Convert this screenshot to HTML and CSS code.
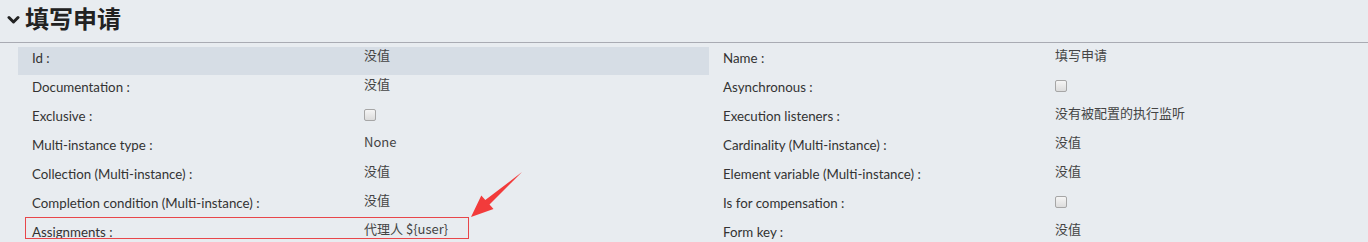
FILE: index.html
```html
<!DOCTYPE html>
<html lang="zh-CN">
<head>
<meta charset="UTF-8">
<meta name="viewport" content="width=device-width, initial-scale=1.0">
<title>填写申请</title>
<link rel="stylesheet" href="styles.css">
</head>
<body>
<div class="panel">
  <div class="panel-header">
    <svg class="chevron" width="13" height="10" viewBox="0 0 13 10">
      <path d="M2 2.5 L6.5 7 L11 2.5" fill="none" stroke="#222" stroke-width="3" stroke-linecap="round" stroke-linejoin="round"/>
    </svg>
    <h1>填写申请</h1>
  </div>

  <div class="props">
    <div class="col col-left">
      <div class="row selected"><span class="label">Id :</span><span class="value">没值</span></div>
      <div class="row"><span class="label">Documentation :</span><span class="value">没值</span></div>
      <div class="row"><span class="label">Exclusive :</span><span class="value"><input type="checkbox" class="check"></span></div>
      <div class="row"><span class="label">Multi-instance type :</span><span class="value">None</span></div>
      <div class="row"><span class="label">Collection (Multi-instance) :</span><span class="value">没值</span></div>
      <div class="row"><span class="label">Completion condition (Multi-instance) :</span><span class="value">没值</span></div>
      <div class="row"><span class="label">Assignments :</span><span class="value">代理人 ${user}</span></div>
    </div>
    <div class="col col-right">
      <div class="row"><span class="label">Name :</span><span class="value">填写申请</span></div>
      <div class="row"><span class="label">Asynchronous :</span><span class="value"><input type="checkbox" class="check"></span></div>
      <div class="row"><span class="label">Execution listeners :</span><span class="value">没有被配置的执行监听</span></div>
      <div class="row"><span class="label">Cardinality (Multi-instance) :</span><span class="value">没值</span></div>
      <div class="row"><span class="label">Element variable (Multi-instance) :</span><span class="value">没值</span></div>
      <div class="row"><span class="label">Is for compensation :</span><span class="value"><input type="checkbox" class="check"></span></div>
      <div class="row"><span class="label">Form key :</span><span class="value">没值</span></div>
    </div>
  </div>

  <!-- annotation: red box + arrow -->
  <div class="mark-box"></div>
  <svg class="mark-arrow" width="60" height="52" viewBox="466 170 60 52">
    <polygon points="471,217 493.5,209 489.5,204.5 522,172 485.3,200.1 481.3,195.6" fill="#f23b3b"/>
  </svg>
</div>
</body>
</html>
```

FILE: styles.css
```css
body {
  margin: 0;
  padding: 0;
  background-color: #e8ecf0;
  font-family: Lato, "Noto Sans CJK SC", sans-serif;
  color: #333;
  overflow: hidden;
}
.panel {
  position: relative;
  height: 242px;
}
.panel-header {
  display: flex;
  align-items: flex-start;
  height: 43px;
  padding-left: 7px;
  box-sizing: border-box;
  border-bottom: 1px solid #a9abb3;
}
.chevron {
  margin-top: 15px;
  margin-right: 5px;
}
.panel-header h1 {
  margin: 0;
  padding-top: 2px;
  font-family: "Noto Sans CJK SC", sans-serif;
  font-size: 24px;
  font-weight: bold;
  line-height: 32px;
  color: #222;
}
.props {
  display: flex;
  padding-left: 18px;
  padding-top: 4px;
}
.col-left {
  width: 691px;
  flex-shrink: 0;
}
.col-right {
  flex: 1;
}
.row {
  display: flex;
  height: 28px;
  margin-bottom: 1px;
  font-size: 13px;
}
.row.selected {
  background-color: #d6dde5;
}
.label {
  width: 332px;
  padding-left: 14px;
  padding-top: 1px;
  font-size: 13.3px;
  line-height: 20px;
  color: #333;
  flex-shrink: 0;
}
.value {
  line-height: 16px;
  color: #444;
  font-family: "Noto Sans CJK SC", sans-serif;
}
.check {
  appearance: none;
  -webkit-appearance: none;
  display: block;
  width: 12px;
  height: 12px;
  margin: 4px 0 0 0;
  box-sizing: border-box;
  border: 1px solid #a6a6a6;
  border-radius: 2px;
  background: linear-gradient(#f5f5f5, #dcdcdc);
}
.mark-box {
  position: absolute;
  left: 25px;
  top: 217px;
  width: 444px;
  height: 22px;
  border: 1px solid #e8464a;
  box-sizing: border-box;
}
.mark-arrow {
  position: absolute;
  left: 466px;
  top: 170px;
}
```
